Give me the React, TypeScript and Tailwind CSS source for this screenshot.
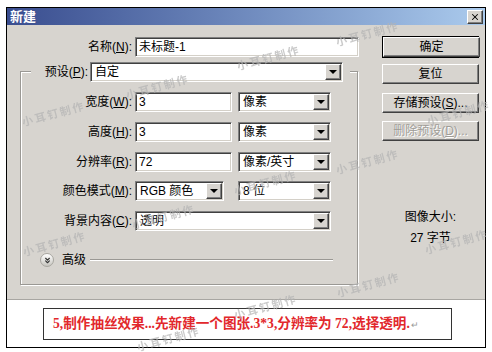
import { ChevronsDown, X } from "lucide-react";

// classic win2k bevels
const sunken =
  "bg-white border border-t-[#808080] border-l-[#808080] border-b-white border-r-white shadow-[inset_1px_1px_0_#404040,inset_-1px_-1px_0_#d4d0c8]";
const raised =
  "bg-[#d7d4cf] border border-t-white border-l-white border-b-[#404040] border-r-[#404040] shadow-[inset_-1px_-1px_0_#808080]";

const sans = "font-['Liberation_Sans','Noto_Sans_CJK_SC',sans-serif]";

const marks = [
  "left-[236px] top-[49px]",
  "left-[335px] top-[25px]",
  "left-[125px] top-[78px]",
  "left-[21px] top-[105px]",
  "left-[426px] top-[104px]",
  "left-[335px] top-[153px]",
  "left-[233px] top-[174px]",
  "left-[131px] top-[208px]",
  "left-[22px] top-[235px]",
  "left-[424px] top-[233px]",
  "left-[336px] top-[276px]",
  "left-[233px] top-[298px]",
  "left-[136px] top-[330px]",
];

function Mn({ k }: { k: string }) {
  return <span className="underline underline-offset-1">{k}</span>;
}

function TextField({ value, width }: { value: string; width: string }) {
  return (
    <div className={`${sunken} ${width} h-[20px] flex items-center pl-[3px] text-[12px]`}>
      {value}
    </div>
  );
}

function Select({ value, width }: { value: string; width: string }) {
  return (
    <div
      className={`${sunken} ${width} h-[20px] flex items-center justify-between pl-[4px] pr-[1px] text-[12px]`}
    >
      <span>{value}</span>
      <div className={`${raised} w-[16px] h-[16px] flex items-center justify-center`}>
        <div className="w-0 h-0 border-x-[4px] border-x-transparent border-t-[4px] border-t-black" />
      </div>
    </div>
  );
}

function Row({
  label,
  children,
}: {
  label: React.ReactNode;
  children: React.ReactNode;
}) {
  return (
    <div className="flex items-center h-[20px] mt-[10px]">
      <div className="w-[112px] text-right text-[12px] pr-[1px]">{label}</div>
      <div className="ml-[2px] flex items-center gap-[6px]">{children}</div>
    </div>
  );
}

function Btn({
  children,
  disabled,
  className = "",
}: {
  children: React.ReactNode;
  disabled?: boolean;
  className?: string;
}) {
  return (
    <div
      className={`${raised} w-[97px] h-[20px] flex items-center justify-center text-[12px] ${
        disabled ? "text-[#a09d98] [text-shadow:1px_1px_0_#ffffff]" : ""
      } ${className}`}
    >
      {children}
    </div>
  );
}

export default function App() {
  return (
    <div className={`relative w-[492px] h-[352px] bg-white overflow-hidden ${sans} text-black`}>
      <div className="ml-[6px] mt-[7px] w-[480px] h-[341px] border border-black flex flex-col">
        {/* Title bar */}
        <div className="h-[17px] bg-gradient-to-r from-[#3a4d8f] to-[#abcbed] flex items-center justify-between pl-[3px] pr-[2px]">
          <span className="text-white font-bold text-[13px] leading-none">新建</span>
          <div className={`${raised} w-[16px] h-[14px] flex items-center justify-center`}>
            <X className="w-[10px] h-[10px]" strokeWidth={2.5} />
          </div>
        </div>

        {/* Dialog body */}
        <div className="h-[275px] bg-[#d7d4cf] border-b border-[#a8a6a2] flex">
          <div className="w-[368px] flex flex-col">
            <div className="flex items-center h-[20px] mt-[12px]">
              <div className="w-[126px] text-right text-[12px] pr-[1px]">
                名称(<Mn k="N" />):
              </div>
              <div className="ml-[2px]">
                <TextField value="未标题-1" width="w-[224px]" />
              </div>
            </div>

            {/* Preset group */}
            <div className="ml-[13px] mt-[14px] w-[338px] h-[214px] border border-[#9a9894] shadow-[inset_1px_1px_0_#ffffff,1px_1px_0_#ffffff] flex flex-col">
              <div className="-mt-[10px] ml-[10px] w-[319px] h-[20px] bg-[#d7d4cf] flex items-center justify-end gap-[2px] pr-[7px]">
                <span className="text-[12px]">
                  预设(<Mn k="P" />):
                </span>
                <Select value="自定" width="w-[253px]" />
              </div>

              <Row label={<>宽度(<Mn k="W" />):</>}>
                <TextField value="3" width="w-[97px]" />
                <Select value="像素" width="w-[93px]" />
              </Row>
              <Row label={<>高度(<Mn k="H" />):</>}>
                <TextField value="3" width="w-[97px]" />
                <Select value="像素" width="w-[93px]" />
              </Row>
              <Row label={<>分辨率(<Mn k="R" />):</>}>
                <TextField value="72" width="w-[97px]" />
                <Select value="像素/英寸" width="w-[93px]" />
              </Row>
              <div className="-mt-[1px]">
                <Row label={<>颜色模式(<Mn k="M" />):</>}>
                  <div className="mr-[8px]">
                    <Select value="RGB 颜色" width="w-[89px]" />
                  </div>
                  <Select value="8 位" width="w-[93px]" />
                </Row>
              </div>
              <Row label={<>背景内容(<Mn k="C" />):</>}>
                <Select value="透明" width="w-[196px]" />
              </Row>

              <div className="flex items-center h-[14px] mt-[22px] ml-[19px]">
                <div className="w-[14px] h-[14px] rounded-full bg-gradient-to-b from-white to-[#c8c6c0] border border-[#a8a6a0] flex items-center justify-center">
                  <ChevronsDown className="w-[9px] h-[9px] text-[#333]" strokeWidth={3} />
                </div>
                <span className="ml-[8px] text-[12px]">高级</span>
                <div className="ml-[4px] w-[243px] h-[2px] border-t border-[#9a9894] border-b border-b-white" />
              </div>
            </div>
          </div>

          {/* Right column */}
          <div className="w-[97px] ml-[7px] flex flex-col mt-[11px]">
            <div className="border border-black">
              <Btn className="w-[95px] h-[18px]">确定</Btn>
            </div>
            <Btn className="mt-[6px]">复位</Btn>
            <Btn className="mt-[9px]">
              存储预设(<Mn k="S" />)...
            </Btn>
            <Btn disabled className="mt-[8px]">
              删除预设(<Mn k="D" />)...
            </Btn>
            <div className="mt-[69px] text-center text-[12px] leading-[14px]">图像大小:</div>
            <div className="mt-[7px] text-center text-[12px] leading-[14px]">27 字节</div>
          </div>
        </div>

        {/* Caption */}
        <div className="flex-1 bg-white">
          <div className="ml-[36px] mt-[8px] w-[409px] h-[32px] border border-[#333] flex items-center pl-[9px]">
            <span className="font-['Liberation_Serif','Noto_Sans_CJK_SC',serif] font-bold text-[13.6px] text-[#e2282c] whitespace-nowrap">
              5,制作抽丝效果...先新建一个图张.3*3,分辨率为 72,选择透明.
            </span>
            <span className="text-[9px] text-[#999] ml-[1px] mt-[3px]">↵</span>
          </div>
        </div>
      </div>

      {/* Watermarks */}
      {marks.map((pos, i) => (
        <span
          key={i}
          className={`absolute ${pos} -rotate-[15deg] text-[11px] tracking-[2px] font-bold text-[#b4b4b4] opacity-70 whitespace-nowrap font-['Noto_Sans_CJK_SC',sans-serif] pointer-events-none`}
        >
          小耳钉制作
        </span>
      ))}
    </div>
  );
}
